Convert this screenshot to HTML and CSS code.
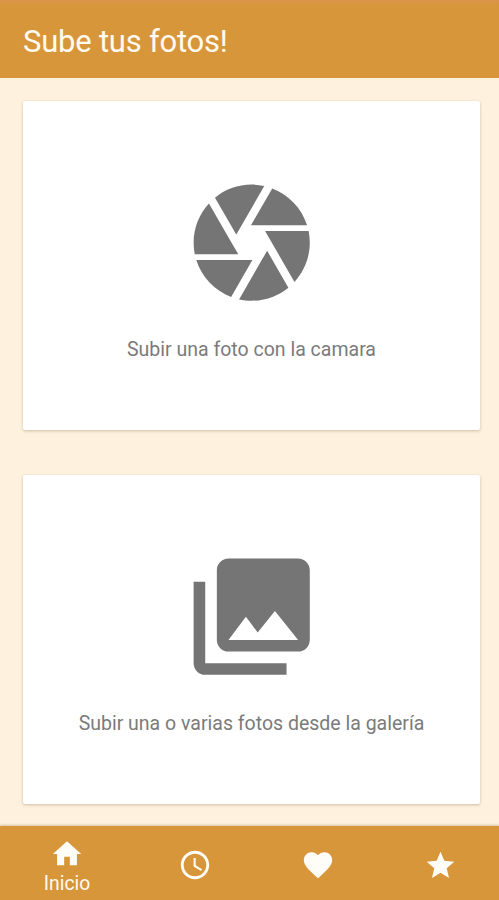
FILE: index.html
```html
<!DOCTYPE html>
<html lang="es">
<head>
<meta charset="utf-8">
<title>Sube tus fotos!</title>
<link rel="stylesheet" href="styles.css">
</head>
<body>
<header class="topbar"><h1 class="title">Sube tus fotos!</h1></header>
<main class="content">
  <section class="card">
    <svg class="card-icon" viewBox="0 0 24 24"><path d="M9.4 10.5l4.77-8.26C13.47 2.09 12.75 2 12 2c-2.4 0-4.6.85-6.32 2.25l3.66 6.35.06-.1zM21.54 9c-.92-2.92-3.15-5.26-6-6.34L11.88 9h9.66zm.26 1h-7.49l.29.5 4.76 8.25C21 16.97 22 14.61 22 12c0-.69-.07-1.35-.2-2zM8.54 12l-3.9-6.75C3.01 7.03 2 9.39 2 12c0 .69.07 1.35.2 2h7.49l-1.15-2zm-6.08 3c.92 2.92 3.15 5.26 6 6.34L12.12 15H2.46zm11.27 0l-3.9 6.76c.7.15 1.42.24 2.17.24 2.4 0 4.6-.85 6.32-2.25l-3.66-6.35-.93 1.6z"/></svg>
    <p class="label">Subir una foto con la camara</p>
  </section>
  <section class="card">
    <svg class="card-icon" viewBox="0 0 24 24"><path d="M22 16V4c0-1.1-.9-2-2-2H8c-1.1 0-2 .9-2 2v12c0 1.1.9 2 2 2h12c1.1 0 2-.9 2-2zm-11-4l2.03 2.71L16 11l4 5H8l3-4zM2 6v14c0 1.1.9 2 2 2h14v-2H4V6H2z"/></svg>
    <p class="label">Subir una o varias fotos desde la galería</p>
  </section>
</main>
<nav class="tabs">
  <a class="tab tab-active">
    <svg class="tab-icon" viewBox="0 0 24 24"><path d="M10 20v-6h4v6h5v-8h3L12 3 2 12h3v8z"/></svg>
    <span class="tab-label">Inicio</span>
  </a>
  <a class="tab"><svg class="tab-icon" viewBox="0 0 24 24"><path d="M11.99 2C6.47 2 2 6.48 2 12s4.47 10 9.99 10C17.52 22 22 17.52 22 12S17.52 2 11.99 2zM12 20c-4.42 0-8-3.58-8-8s3.58-8 8-8 8 3.58 8 8-3.58 8-8 8zm.5-13H11v6l5.25 3.15.75-1.23-4.5-2.67z"/></svg></a>
  <a class="tab"><svg class="tab-icon" viewBox="0 0 24 24"><path d="M12 21.35l-1.45-1.32C5.4 15.36 2 12.28 2 8.5 2 5.42 4.42 3 7.5 3c1.74 0 3.41.81 4.5 2.09C13.09 3.81 14.76 3 16.5 3 19.58 3 22 5.42 22 8.5c0 3.78-3.4 6.86-8.55 11.54L12 21.35z"/></svg></a>
  <a class="tab"><svg class="tab-icon tab-star" viewBox="0 0 24 24"><path d="M12 17.27L18.18 21l-1.64-7.03L22 9.24l-7.19-.61L12 2 9.19 8.63 2 9.24l5.46 4.73L5.82 21z"/></svg></a>
</nav>
</body>
</html>
```
FILE: styles.css
```css
* { box-sizing: border-box; }
body {
  margin: 0;
  height: 900px;
  display: flex;
  flex-direction: column;
  overflow: hidden;
  background: #fef1dd;
  font-family: Roboto, "Liberation Sans", sans-serif;
}
.topbar {
  height: 78px;
  flex: none;
  display: flex;
  align-items: center;
  padding: 6px 23px 0;
  background: linear-gradient(#dc9450 0, #d8963b 4px);
}
.title {
  margin: 0;
  font-size: 31px;
  line-height: 36px;
  font-weight: 400;
  letter-spacing: -0.22px;
  color: #fffaf0;
}
.content {
  flex: 1;
  display: flex;
  flex-direction: column;
  gap: 45px;
  padding: 22.5px 19px 0 23px;
}
.card {
  height: 329px;
  flex: none;
  display: flex;
  flex-direction: column;
  align-items: center;
  padding-top: 72.3px;
  background: #fff;
  border-radius: 2px;
  box-shadow: 0 1px 3px rgba(90, 70, 40, .3);
}
.card-icon {
  width: 139.4px;
  height: 139.4px;
  flex: none;
  fill: #757575;
}
.label {
  margin: 26px 0 0;
  font-size: 19.5px;
  line-height: 24px;
  white-space: nowrap;
  color: #7b7b7b;
}
.tabs {
  height: 74px;
  flex: none;
  display: grid;
  grid-template-columns: 134px repeat(3, 122.7px);
  background: #d8963b;
  box-shadow: 0 -1px 2px rgba(120, 90, 40, .3);
}
.tab {
  display: flex;
  flex-direction: column;
  align-items: center;
  justify-content: center;
  padding-top: 4px;
  color: #fffaf0;
}
.tab-active {
  justify-content: flex-start;
  padding-top: 11px;
}
.tab-icon {
  width: 34px;
  height: 34px;
  flex: none;
  fill: #fffdf8;
}
.tab-star {
  width: 33px;
  height: 33px;
}
.tab-label {
  font-size: 19.3px;
  line-height: 22px;
  margin-top: 2px;
}
```
